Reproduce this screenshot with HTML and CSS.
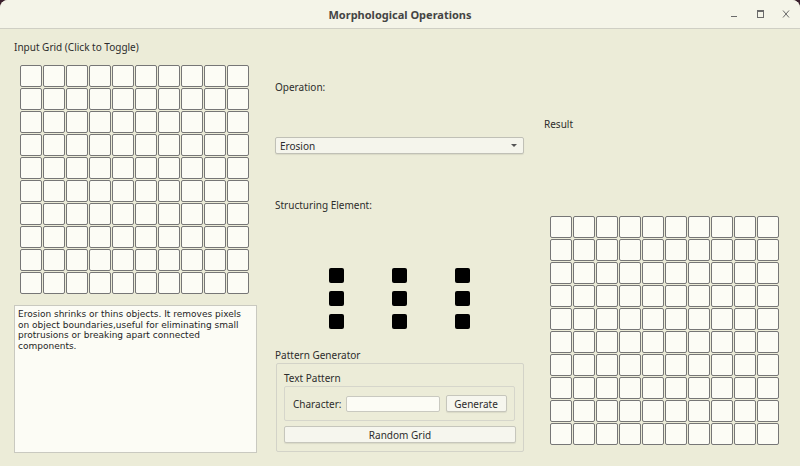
FILE: index.html
```html
<!DOCTYPE html>
<html>
<head>
<meta charset="utf-8">
<link rel="stylesheet" href="styles.css">
<title>Morphological Operations</title>
</head>
<body>
<div class="window">
  <div class="titlebar">
    <div class="title">Morphological Operations</div>
    <div class="controls">
      <svg class="ctl" width="12" height="12" viewBox="0 0 12 12"><path d="M3 8.5h6" stroke="#6a6a6a" stroke-width="1"/></svg>
      <svg class="ctl" width="12" height="12" viewBox="0 0 12 12"><rect x="3.5" y="2.5" width="6" height="7" fill="none" stroke="#6a6a6a" stroke-width="1"/><path d="M3.5 3.5h6" stroke="#6a6a6a"/></svg>
      <svg class="ctl" width="12" height="12" viewBox="0 0 12 12"><path d="M3 2.5l6 7M9 2.5l-6 7" stroke="#6a6a6a" stroke-width="1"/></svg>
    </div>
  </div>
  <div class="content">
    <div class="col left">
      <div class="label first">Input Grid (Click to Toggle)</div>
      <div class="grid input-grid" id="inputGrid"></div>
      <div class="desc">Erosion shrinks or thins objects. It removes pixels on object boundaries,useful for eliminating small protrusions or breaking apart connected components.</div>
    </div>
    <div class="col middle">
      <div class="label op-label">Operation:</div>
      <div class="combo"><span>Erosion</span><span class="arrow"></span></div>
      <div class="label se-label">Structuring Element:</div>
      <div class="se">
        <div class="sq"></div><div class="sq"></div><div class="sq"></div>
        <div class="sq"></div><div class="sq"></div><div class="sq"></div>
        <div class="sq"></div><div class="sq"></div><div class="sq"></div>
      </div>
      <div class="label pg-label">Pattern Generator</div>
      <div class="group">
        <div class="label tp-label">Text Pattern</div>
        <div class="inner">
          <span class="label">Character:</span>
          <div class="input"></div>
          <div class="btn gen">Generate</div>
        </div>
        <div class="btn random">Random Grid</div>
      </div>
    </div>
    <div class="col right">
      <div class="label result-label">Result</div>
      <div class="grid result-grid" id="resultGrid"></div>
    </div>
  </div>
</div>
<script>
['inputGrid','resultGrid'].forEach(function(id){
  var g=document.getElementById(id);
  for(var i=0;i<100;i++){var c=document.createElement('div');c.className='cell';g.appendChild(c);}
});
</script>
</body>
</html>
```
FILE: styles.css
```css
html, body {
  margin: 0;
  padding: 0;
  background: #3a1f2c;
}
.window {
  width: 800px;
  height: 466px;
  background: #ececd8;
  border-radius: 8px 8px 0 0;
  overflow: hidden;
  display: flex;
  flex-direction: column;
  font-family: "Noto Sans", "DejaVu Sans", sans-serif;
  color: #2c2c2c;
}
.titlebar {
  height: 28px;
  flex: none;
  background: #f4f4e8;
  border-bottom: 1px solid #cfcfc4;
  display: flex;
  align-items: center;
  justify-content: center;
  position: relative;
}
.title {
  font-weight: bold;
  font-size: 11px;
  color: #444;
}
.controls {
  position: absolute;
  right: 8px;
  top: 8px;
  display: flex;
  gap: 14px;
}
.content {
  display: flex;
  flex: 1;
}
.col {
  display: flex;
  flex-direction: column;
}
.left { margin-left: 14px; width: 243px; }
.middle { margin-left: 18px; width: 249px; }
.right { margin-left: 20px; width: 236px; }
.label {
  font-size: 10px;
  line-height: 14px;
}
.first { margin-top: 11px; }
.grid {
  display: grid;
  grid-template-columns: repeat(10, 22px);
  grid-auto-rows: 22px;
  gap: 1px;
}
.input-grid { margin-top: 11px; margin-left: 6px; }
.cell {
  border: 1px solid #767676;
  border-radius: 2px;
  background: #fcfcf5;
}
.desc {
  margin-top: 11px;
  height: 140px;
  border: 1px solid #c9c9c0;
  background: #fcfcf5;
  padding: 3px 3px;
  font-family: "DejaVu Sans", sans-serif;
  font-size: 9px;
  line-height: 10.7px;
  color: #1e1e1e;
}
.op-label { margin-top: 51px; }
.combo {
  margin-top: 43px;
  height: 15px;
  border: 1px solid #c0c0b6;
  border-radius: 2px;
  background: #f5f5ec;
  box-shadow: 0 1px 1px rgba(0,0,0,0.08);
  display: flex;
  align-items: center;
  justify-content: space-between;
  padding: 0 6px 0 4px;
  font-size: 10px;
}
.arrow {
  width: 0; height: 0;
  border-left: 3px solid transparent;
  border-right: 3px solid transparent;
  border-top: 3px solid #555;
}
.se-label { margin-top: 44px; }
.se {
  margin-top: 56px;
  margin-left: 54px;
  display: grid;
  grid-template-columns: repeat(3, 15px);
  grid-auto-rows: 15px;
  column-gap: 48px;
  row-gap: 8px;
}
.sq {
  background: #000;
  border-radius: 2px;
}
.pg-label { margin-top: 19px; }
.group {
  margin-top: 1px;
  margin-left: 1px;
  width: 248px;
  height: 89px;
  border: 1px solid #d3d3c8;
  border-radius: 2px;
  padding: 7px 8px 0 7px;
  box-sizing: border-box;
}
.inner {
  margin-top: 1px;
  height: 35px;
  border: 1px solid #d6d6cb;
  border-radius: 2px;
  box-sizing: border-box;
  display: flex;
  align-items: center;
  padding-left: 8px;
}
.input {
  margin-left: 4px;
  width: 94px;
  height: 16px;
  box-sizing: border-box;
  border: 1px solid #c9c9c0;
  border-radius: 2px;
  background: #fcfcf5;
}
.btn {
  border: 1px solid #c6c6bc;
  border-radius: 2px;
  background: #f6f6ee;
  box-shadow: 0 1px 1px rgba(0,0,0,0.08);
  font-size: 10px;
  display: flex;
  align-items: center;
  justify-content: center;
  box-sizing: border-box;
}
.gen { margin-left: 6px; width: 61px; height: 17px; }
.random { margin-top: 5px; height: 17px; width: 232px; }
.result-label { margin-top: 88px; }
.result-grid { margin-top: 85px; margin-left: 6px; }
```
